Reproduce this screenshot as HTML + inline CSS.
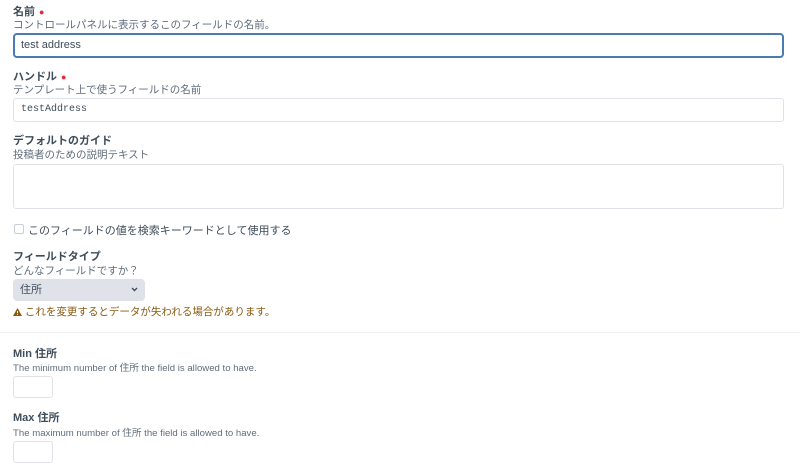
<!DOCTYPE html>
<html><head><meta charset="utf-8"><style>
body{margin:0;width:800px;height:470px;background:#fff;font-family:"Liberation Sans","Noto Sans CJK JP",sans-serif;font-size:11px;color:#3f4d5a;position:relative;overflow:hidden}
.a{position:absolute;white-space:nowrap}
.l{font-weight:bold;color:#3f4d5a}
.d{color:#606d7b;font-size:10.5px}
.e{color:#606d7b;font-size:9.6px}
.req{color:#e12d39;font-size:9px;margin-left:4px}
.in{position:absolute;border:1px solid #dfe3e8;border-radius:3px;background:#fff;box-sizing:border-box}
</style></head><body>
<div class="a l" style="left:13px;top:3px">名前<span class="req">●</span></div>
<div class="a d" style="left:13px;top:17px">コントロールパネルに表示するこのフィールドの名前。</div>
<div class="in" style="left:13px;top:33px;width:771px;height:25px;border:2px solid #4a7cb2;border-radius:4px;padding:0 0 0 6px;line-height:21px;color:#3f4d5a">test address</div>
<div class="a l" style="left:13px;top:68px">ハンドル<span class="req">●</span></div>
<div class="a d" style="left:13px;top:82px">テンプレート上で使うフィールドの名前</div>
<div class="in" style="left:13px;top:98px;width:771px;height:24px;padding:0 0 0 7px;line-height:22px;font-family:'Liberation Mono',monospace;font-size:10px">testAddress</div>
<div class="a l" style="left:13px;top:132px">デフォルトのガイド</div>
<div class="a d" style="left:13px;top:147px">投稿者のための説明テキスト</div>
<div class="in" style="left:13px;top:164px;width:771px;height:45px"></div>
<div class="in" style="left:14px;top:224px;width:10px;height:10px;border-radius:2px;border-color:#c7ced6"></div>
<div class="a" style="left:28px;top:222px;color:#3f4d5a">このフィールドの値を検索キーワードとして使用する</div>
<div class="a l" style="left:13px;top:248px">フィールドタイプ</div>
<div class="a d" style="left:13px;top:263px">どんなフィールドですか？</div>
<div class="in" style="left:13px;top:279px;width:132px;height:22px;background:#dfe3e9;border:none;border-radius:4px;padding:0 0 0 7px;line-height:22px">住所<svg style="position:absolute;right:7px;top:8px" width="7" height="5" viewBox="0 0 7 5"><path d="M1 1l2.5 2.5L6 1" stroke="#3f4d5a" stroke-width="1.4" fill="none"/></svg></div>
<div class="a" style="left:13px;top:304px;color:#8b5a10;font-size:10.5px"><svg width="9" height="8" viewBox="0 0 9 8" style="vertical-align:-1px"><path d="M4.5 0L9 8H0z" fill="#8b5a10"/><path d="M4.5 3v2.2M4.5 6v.8" stroke="#fff" stroke-width="1"/></svg> これを変更するとデータが失われる場合があります。</div>
<div class="a" style="left:0;top:332px;width:800px;height:1px;background:#eef0f2"></div>
<div class="a l" style="left:13px;top:345px">Min 住所</div>
<div class="a e" style="left:13px;top:360px">The minimum number of 住所 the field is allowed to have.</div>
<div class="in" style="left:13px;top:376px;width:40px;height:22px"></div>
<div class="a l" style="left:13px;top:409px">Max 住所</div>
<div class="a e" style="left:13px;top:425px">The maximum number of 住所 the field is allowed to have.</div>
<div class="in" style="left:13px;top:441px;width:40px;height:22px"></div>
</body></html>
